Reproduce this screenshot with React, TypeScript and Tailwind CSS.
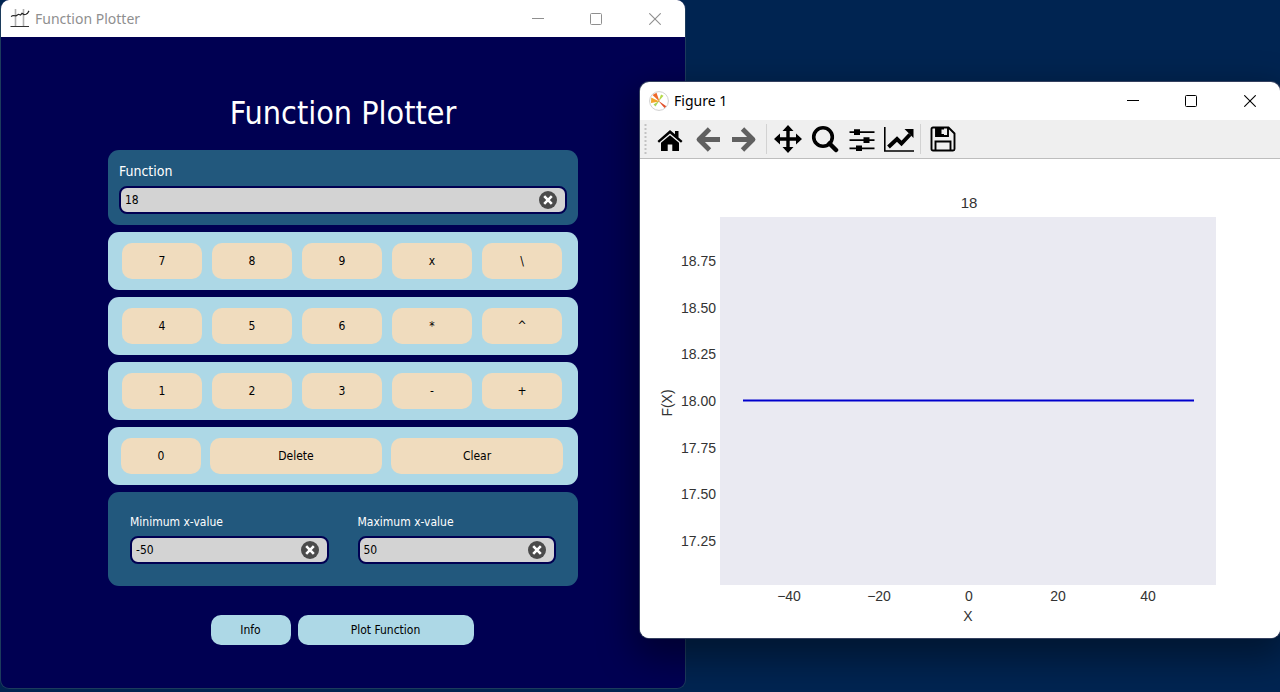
import { useState } from "react";
import type { ReactNode } from "react";

const keyRows = [
  ["7", "8", "9", "x", "\\"],
  ["4", "5", "6", "*", "^"],
  ["1", "2", "3", "-", "+"],
];

const yTicks = [
  { label: "18.75", y: 102 },
  { label: "18.50", y: 149 },
  { label: "18.25", y: 195 },
  { label: "18.00", y: 242 },
  { label: "17.75", y: 289 },
  { label: "17.50", y: 335 },
  { label: "17.25", y: 382 },
];

const xTicks = [
  { label: "−40", x: 149 },
  { label: "−20", x: 239 },
  { label: "0", x: 329 },
  { label: "20", x: 418 },
  { label: "40", x: 508 },
];

function WindowControls() {
  return (
    <div className="flex items-center">
      <button type="button" aria-label="Minimize" className="flex w-[58px] justify-center">
        <svg width="12" height="12" viewBox="0 0 12 12" fill="none" stroke="currentColor">
          <path d="M0 5.5h12" />
        </svg>
      </button>
      <button type="button" aria-label="Maximize" className="flex w-[58px] justify-center">
        <svg width="12" height="12" viewBox="0 0 12 12" fill="none" stroke="currentColor">
          <rect x="0.5" y="0.5" width="11" height="11" rx="1" />
        </svg>
      </button>
      <button type="button" aria-label="Close" className="flex w-[60px] justify-center">
        <svg width="12" height="12" viewBox="0 0 12 12" fill="none" stroke="currentColor" strokeWidth="1.1">
          <path d="M0.3 0.3l11.4 11.4M11.7 0.3L0.3 11.7" />
        </svg>
      </button>
    </div>
  );
}

function ClearableInput({ id, value, onChange }: { id: string; value: string; onChange: (v: string) => void }) {
  return (
    <div className="flex h-7 items-center rounded-lg border-2 border-[#000052] bg-[#d3d3d3] pr-2 pl-1">
      <input
        id={id}
        type="text"
        value={value}
        onChange={(e) => onChange(e.target.value)}
        className="min-w-0 flex-1 bg-transparent text-xs text-black outline-none"
      />
      <button type="button" aria-label="Clear text" onClick={() => onChange("")}>
        <svg width="18" height="18" viewBox="0 0 18 18" className="block">
          <circle cx="9" cy="9" r="9" fill="#4b4b4b" />
          <path d="M5.2 5.2l7.6 7.6M12.8 5.200l-7.600 7.600" stroke="#fff" strokeWidth="2.6" />
        </svg>
      </button>
    </div>
  );
}

function Key({ children, className, onClick }: { children: ReactNode; className: string; onClick: () => void }) {
  return (
    <button
      type="button"
      onClick={onClick}
      className={`h-9 rounded-[10px] bg-[#f0dcbe] text-xs text-black ${className}`}
    >
      {children}
    </button>
  );
}

function ToolButton({ label, className, children }: { label: string; className: string; children: ReactNode }) {
  return (
    <button type="button" aria-label={label} className={`flex h-7 items-center justify-center ${className}`}>
      {children}
    </button>
  );
}

function PlotterWindow() {
  const [expr, setExpr] = useState("18");
  const [min, setMin] = useState("-50");
  const [max, setMax] = useState("50");

  return (
    <section className="w-[calc(50%+46px)] overflow-hidden rounded-[9px] border-x border-b border-[#1c3b5c] bg-[#000052] font-['DejaVu_Sans_Condensed','DejaVu_Sans',sans-serif]">
      <header className="flex h-[37px] items-center bg-white text-[#8f8f8f]">
        <svg width="20" height="20" viewBox="0 0 20 20" fill="none" className="ml-[9px]">
          <path d="M5.500 0v18M13.500 0v18" stroke="#b0b0b0" strokeWidth="1.6" />
          <path d="M0.500 17.500h18.500" stroke="#333" strokeWidth="1.2" />
          <path d="M1 7.500l2-1 3 .3 2.500-1.500 2 .8 1.500-1.800 2 1.300 2-.3 1.500-1 1.500-2.400" stroke="#222" strokeWidth="1.2" />
        </svg>
        <span className="ml-[5px] flex-1 font-['Noto_Sans','Open_Sans',sans-serif] text-sm">Function Plotter</span>
        <WindowControls />
      </header>
      <main className="mx-auto w-full max-w-[470px] pt-[54px] pb-[43px]">
        <h1 className="mb-[15px] text-center text-[32px] leading-[44px] text-white">Function Plotter</h1>
        <div className="flex flex-col gap-[7px]">
          <div className="rounded-[11px] bg-[#22587d] px-[11px] pt-[11px] pb-[11px]">
            <label htmlFor="expr" className="mb-1 block text-sm leading-[21px] text-white">Function</label>
            <ClearableInput id="expr" value={expr} onChange={setExpr} />
          </div>
          {keyRows.map((row) => (
            <div key={row[0]} className="flex h-[58px] items-center gap-2.5 rounded-[11px] bg-[#add8e6] pr-4 pl-3.5">
              {row.map((k) => (
                <Key key={k} className="flex-1" onClick={() => setExpr(expr + k)}>{k}</Key>
              ))}
            </div>
          ))}
          <div className="flex h-[58px] items-center gap-[9px] rounded-[11px] bg-[#add8e6] pr-[15px] pl-[13px]">
            <Key className="w-20" onClick={() => setExpr(expr + "0")}>0</Key>
            <Key className="flex-1" onClick={() => setExpr(expr.slice(0, -1))}>Delete</Key>
            <Key className="flex-1" onClick={() => setExpr("")}>Clear</Key>
          </div>
          <div className="grid grid-cols-2 gap-[29px] rounded-[11px] bg-[#22587d] px-[22px] pt-5 pb-[22px]">
            <div>
              <label htmlFor="min" className="mb-1 block text-xs leading-5 text-white">Minimum x-value</label>
              <ClearableInput id="min" value={min} onChange={setMin} />
            </div>
            <div>
              <label htmlFor="max" className="mb-1 block text-xs leading-5 text-white">Maximum x-value</label>
              <ClearableInput id="max" value={max} onChange={setMax} />
            </div>
          </div>
        </div>
        <div className="mt-[29px] flex justify-center gap-[7px] pr-0.5">
          <button type="button" className="h-[30px] w-20 rounded-[10px] bg-[#add8e6] text-xs text-black">Info</button>
          <button type="button" className="h-[30px] w-44 rounded-[10px] bg-[#add8e6] text-xs text-black">Plot Function</button>
        </div>
      </main>
    </section>
  );
}

function Toolbar() {
  return (
    <div className="flex h-[39px] items-center border-b border-[#bdbdbd] bg-[#efefef] text-black">
      <svg width="4" height="32" viewBox="0 0 4 32" className="mr-2 ml-1">
        <path d="M1.500 1v31" stroke="#c2c2c2" strokeWidth="2" strokeDasharray="2 2" />
      </svg>
      <ToolButton label="Home" className="w-7">
        <svg width="26" height="24" viewBox="0 0 26 24" fill="currentColor">
          <path d="M13 3L0.500 14l1.500 1.800L13 6.500l11 9.300 1.500-1.800-4-3.500V4h-3.500v3.300z" />
          <path d="M13 8.200L4 15.800v8.200h6.700v-6.500h4.600V24H22v-8.200z" />
        </svg>
      </ToolButton>
      <ToolButton label="Back" className="ml-2 w-8">
        <svg width="26" height="26" viewBox="0 0 26 26" fill="none" stroke="#606060" strokeWidth="4.800" strokeLinejoin="round">
          <path d="M25 13.500H4M14.500 3L4 13.500 14.500 24" />
        </svg>
      </ToolButton>
      <ToolButton label="Forward" className="ml-1 w-8">
        <svg width="26" height="26" viewBox="0 0 26 26" fill="none" stroke="#606060" strokeWidth="4.800" strokeLinejoin="round">
          <path d="M1 13.500h21M11.500 3L22 13.500 11.500 24" />
        </svg>
      </ToolButton>
      <span className="ml-1.5 h-[30px] w-px bg-[#d2d2d2]" />
      <ToolButton label="Pan" className="ml-1.5 w-[30px]">
        <svg width="28" height="28" viewBox="0 0 28 28" fill="currentColor">
          <path d="M14 0l5.500 6h-3.800v6.300H22V8.500l6 5.500-6 5.500v-3.800h-6.300V22h3.800L14 28l-5.500-6h3.800v-6.300H6v3.800L0 14l6-5.500v3.800h6.300V6H8.500z" />
        </svg>
      </ToolButton>
      <ToolButton label="Zoom" className="ml-2 w-7">
        <svg width="28" height="28" viewBox="0 0 28 28" fill="none" stroke="currentColor">
          <circle cx="12" cy="12" r="9.300" strokeWidth="3.600" />
          <path d="M18.500 18.500l6.500 6.500" strokeWidth="4.500" strokeLinecap="round" />
        </svg>
      </ToolButton>
      <ToolButton label="Configure subplots" className="ml-[9px] w-7">
        <svg width="26" height="24" viewBox="0 0 26 24" fill="currentColor">
          <path d="M0.500 4.200h25v1.800h-25zM0.500 12.200h25v1.800h-25zM0.500 20.400h25v1.800h-25z" />
          <path d="M5 2.200h6v5.800H5zM14.500 10.200h6V16h-6zM7 18.400h6V24H7z" />
        </svg>
      </ToolButton>
      <ToolButton label="Edit axes" className="ml-2 w-[30px]">
        <svg width="30" height="26" viewBox="0 0 30 26" fill="none" stroke="currentColor">
          <path d="M0.800 1v24H30" strokeWidth="1.600" />
          <path d="M4.500 21l8.500-8 4.500 4.500L26 8.500" strokeWidth="4" />
          <path d="M20.500 3h9v9z" fill="currentColor" stroke="none" />
        </svg>
      </ToolButton>
      <span className="ml-1.5 h-[30px] w-px bg-[#d2d2d2]" />
      <ToolButton label="Save" className="ml-2 w-7">
        <svg width="26" height="26" viewBox="0 0 26 26" fill="none" stroke="currentColor" strokeWidth="1.900">
          <path d="M1.500 3a1.500 1.500 0 0 1 1.500-1.500h15.500l6 6V23a1.500 1.500 0 0 1-1.500 1.500H3A1.500 1.500 0 0 1 1.500 23z" />
          <path d="M6 1.500v8.500h12V1.500" />
          <path d="M6 2h8v1.500h-2.500V8H14v2H6z" fill="currentColor" stroke="none" />
          <path d="M5.500 24.500v-9h15v9" />
        </svg>
      </ToolButton>
    </div>
  );
}

function Chart() {
  return (
    <svg viewBox="0 0 640 479" role="img" aria-label="Plot of 18" className="block w-full bg-white font-['Liberation_Sans',Arial,sans-serif]">
      <rect x="80" y="58" width="496" height="368" fill="#eaeaf2" />
      <path d="M103 241.500H554" stroke="#0000cd" strokeWidth="2" />
      <g fill="#333333" fontSize="14">
        <text x="329" y="49" fontSize="15" textAnchor="middle">18</text>
        {yTicks.map((t) => (
          <text key={t.label} x="76" y={t.y + 5} textAnchor="end">{t.label}</text>
        ))}
        {xTicks.map((t) => (
          <text key={t.label} x={t.x} y="442" textAnchor="middle">{t.label}</text>
        ))}
        <text x="328" y="462" textAnchor="middle">X</text>
        <text transform="translate(32 244) rotate(-90)" textAnchor="middle">F(X)</text>
      </g>
    </svg>
  );
}

function FigureWindow() {
  return (
    <section className="absolute top-[82px] right-0 w-1/2 overflow-hidden rounded-[9px] bg-white shadow-[0_14px_36px_6px_rgba(0,0,0,0.4)] ring-1 ring-[#34405f]">
      <header className="flex h-[38px] items-center text-black">
        <svg width="20" height="20" viewBox="0 0 20 20" className="ml-[9px]">
          <circle cx="10" cy="10" r="9.400" fill="#fff" stroke="#cfcfcf" />
          <path d="M10.500 10.500L3.500 4 7.500 1.800z" fill="#ee6a2c" />
          <path d="M10.500 10.500L2.200 6.500 2 12z" fill="#f3a52c" />
          <path d="M9.500 10.500l2.500-7 2.500 1.300z" fill="#b4d94a" />
          <path d="M10.500 9.500l-4 6-2-2z" fill="#a9d65a" />
          <path d="M9 9.500l6.500 7.500 1.800-1.800z" fill="#e2502a" />
        </svg>
        <span className="ml-[5px] flex-1 font-['Noto_Sans','Open_Sans',sans-serif] text-sm">Figure 1</span>
        <WindowControls />
      </header>
      <Toolbar />
      <Chart />
    </section>
  );
}

export default function App() {
  return (
    <div className="relative min-h-screen overflow-hidden bg-[#002451]">
      <PlotterWindow />
      <FigureWindow />
    </div>
  );
}
